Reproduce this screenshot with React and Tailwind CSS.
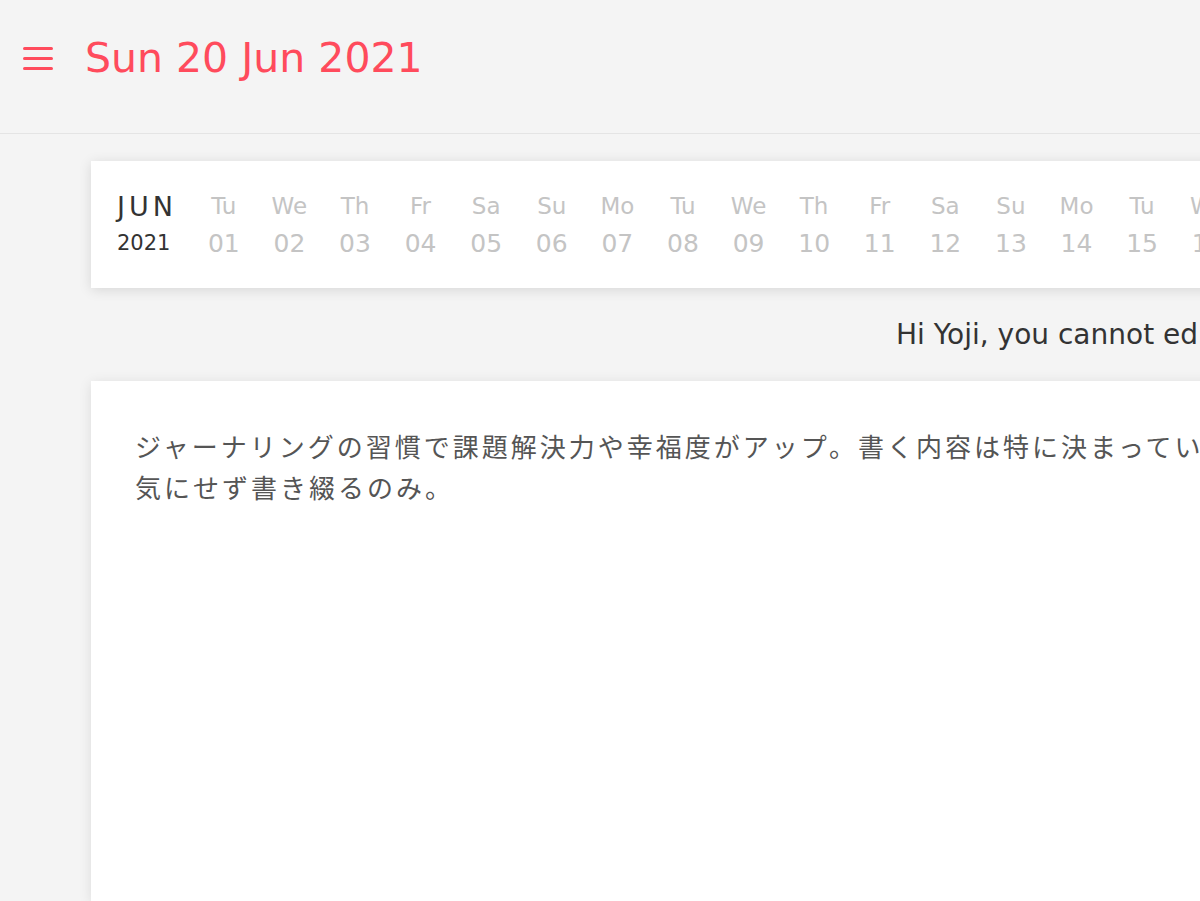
const days = [
  ['Tu', '01'], ['We', '02'], ['Th', '03'], ['Fr', '04'], ['Sa', '05'], ['Su', '06'],
  ['Mo', '07'], ['Tu', '08'], ['We', '09'], ['Th', '10'], ['Fr', '11'], ['Sa', '12'],
  ['Su', '13'], ['Mo', '14'], ['Tu', '15'], ['We', '16'], ['Th', '17'], ['Fr', '18'],
]

function App() {
  return (
    <div className="min-h-[901px] w-[1200px] overflow-hidden bg-[#f4f4f4] font-['DejaVu_Sans',sans-serif]">
      {/* Header */}
      <header className="flex h-[134px] items-center border-b border-[#e4e4e4] pb-[17px] pl-[23px]">
        <div className="flex w-[30px] flex-col gap-[7px]">
          <span className="h-[3px] rounded-full bg-[#ff4b5c]" />
          <span className="h-[3px] rounded-full bg-[#ff4b5c]" />
          <span className="h-[3px] rounded-full bg-[#ff4b5c]" />
        </div>
        <h1 className="ml-[32px] text-[41px] font-normal leading-none text-[#ff4b5c]">Sun 20 Jun 2021</h1>
      </header>

      <main className="pl-[91px] pt-[27px]">
        {/* Calendar strip */}
        <div className="flex h-[127px] w-[1400px] items-center bg-white pl-[26px] shadow-[0_2px_12px_rgba(0,0,0,0.12)]">
          <div className="w-[74px] text-[#333]">
            <div className="text-[27px] leading-[37px] tracking-[4px]">JUN</div>
            <div className="text-[21px] leading-[37px]">2021</div>
          </div>
          <div className="flex">
            {days.map(([d, n], i) => (
              <div key={i} className="flex w-[65.6px] flex-col items-center text-[#c4c4c4]">
                <span className="text-[23px] leading-[37px]">{d}</span>
                <span className="text-[25px] leading-[37px]">{n}</span>
              </div>
            ))}
          </div>
        </div>

        <p className="ml-[805px] whitespace-nowrap pt-[27px] text-[28px] leading-[40px] text-[#333]">
          Hi Yoji, you cannot edit past journals.
        </p>

        {/* Journal card */}
        <div className="mt-[26px] h-[520px] w-[1400px] bg-white px-[44px] pt-[44px] shadow-[0_2px_12px_rgba(0,0,0,0.1)]">
          <p className="whitespace-nowrap font-['Noto_Sans_CJK_JP',sans-serif] text-[26px] leading-[41px] tracking-[3px] text-[#555]">
            ジャーナリングの習慣で課題解決力や幸福度がアップ。書く内容は特に決まっていないので、人に見せることを
            <br />
            気にせず書き綴るのみ。
          </p>
        </div>
      </main>
    </div>
  )
}

export default App
